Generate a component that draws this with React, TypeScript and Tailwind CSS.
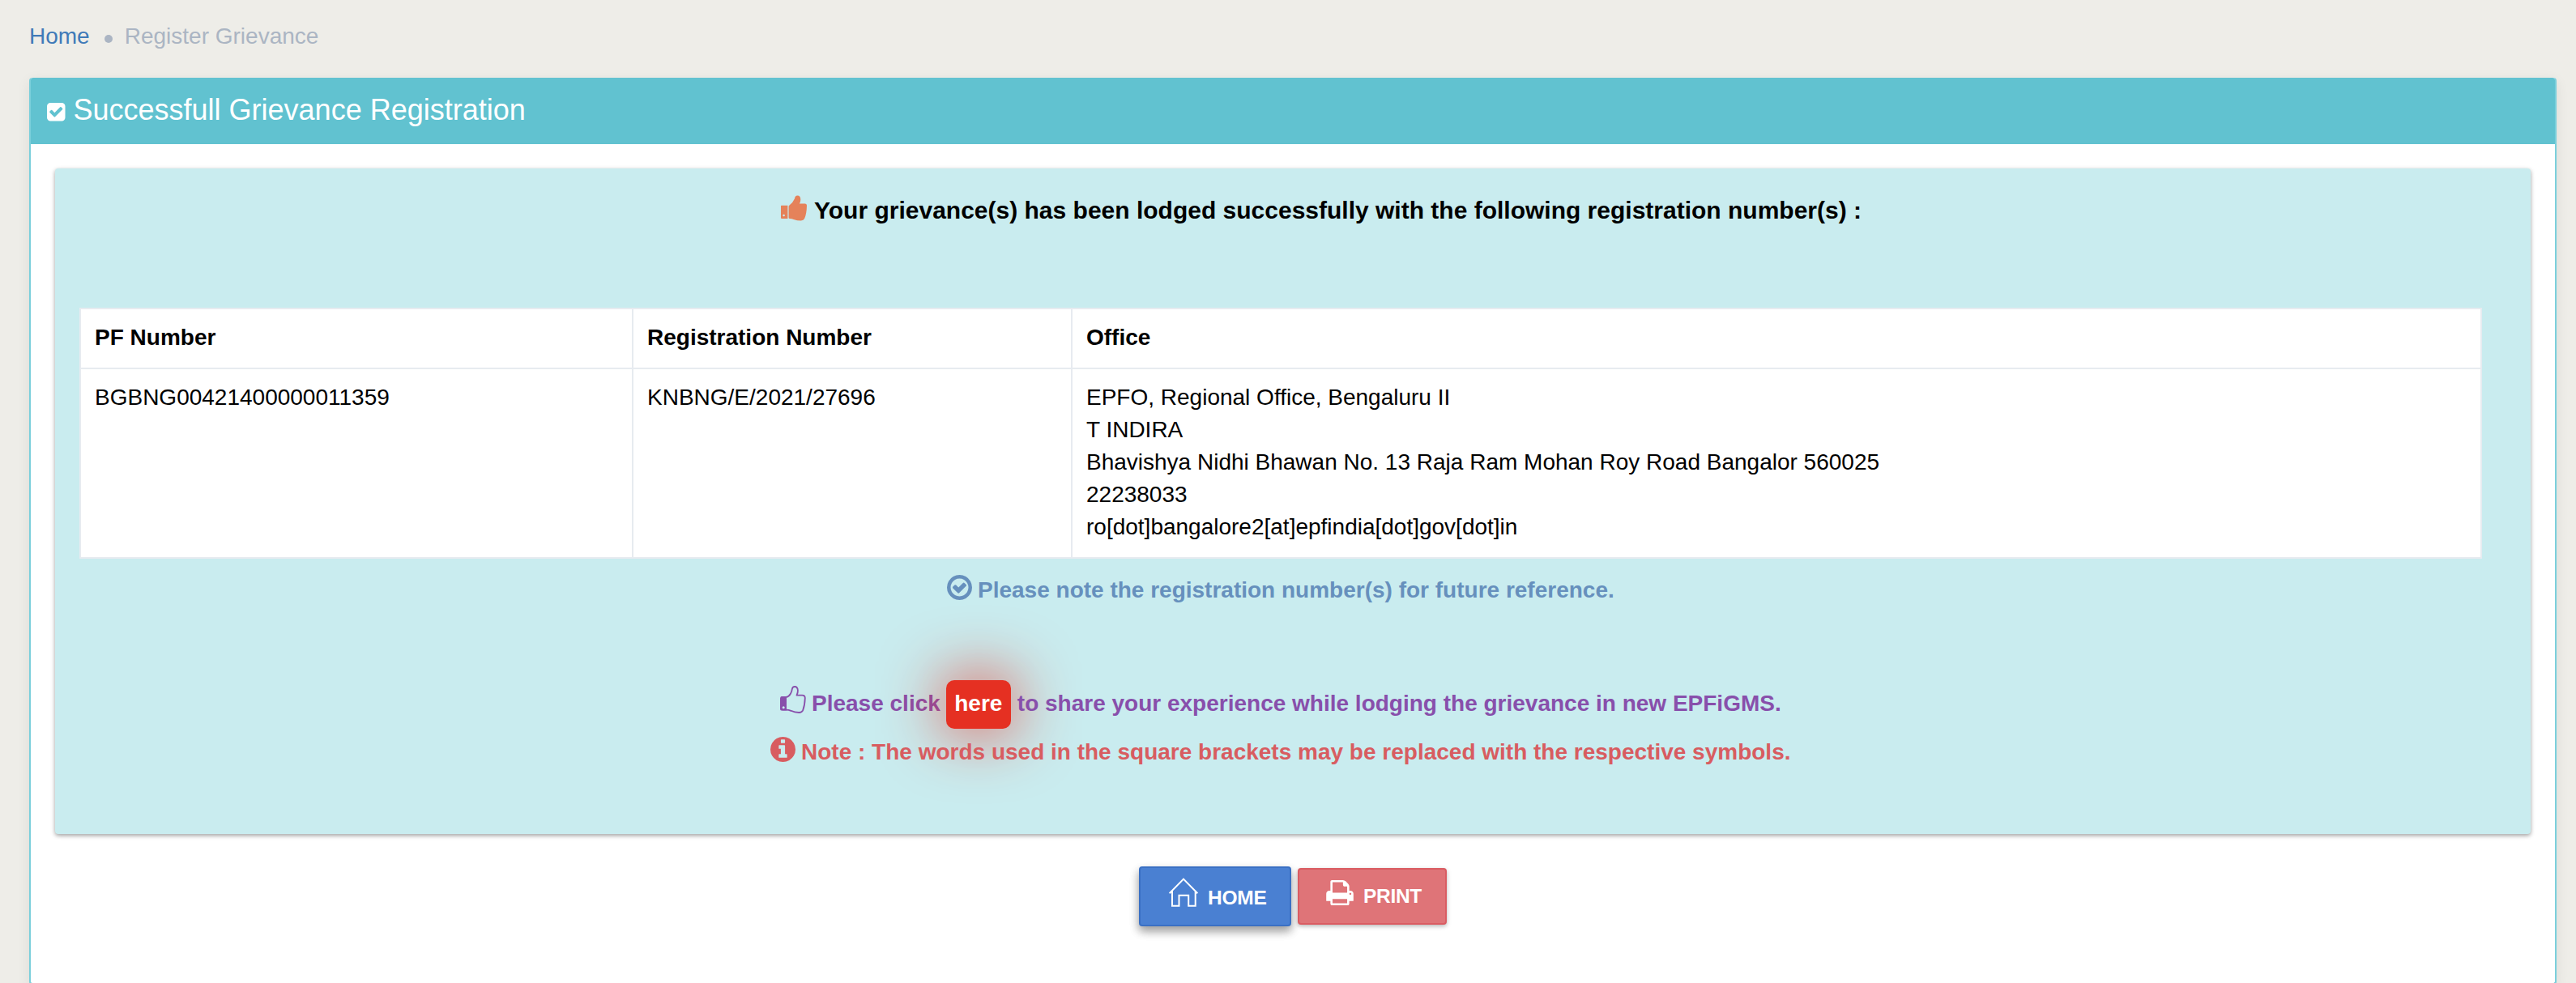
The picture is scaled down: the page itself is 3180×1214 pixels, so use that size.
import React from "react";

type IconProps = { className?: string };

function CheckSquareIcon({ className }: IconProps) {
  return (
    <svg className={className} viewBox="128 128 1536 1536" fill="currentColor">
      <path d="M813 1299l614-614q19-19 19-45t-19-45l-102-102q-19-19-45-19t-45 19l-467 467-211-211q-19-19-45-19t-45 19l-102 102q-19 19-19 45t19 45l358 358q19 19 45 19t45-19zm851-883v960q0 119-84.500 203.500t-203.500 84.500h-960q-119 0-203.500-84.500t-84.500-203.500v-960q0-119 84.500-203.500t203.500-84.500h960q119 0 203.500 84.500t84.500 203.500z" />
    </svg>
  );
}

function CheckCircleIcon({ className }: IconProps) {
  return (
    <svg className={className} viewBox="128 128 1536 1536" fill="currentColor">
      <path d="M1299 813l-422 422q-19 19-45 19t-45-19l-294-294q-19-19-19-45t19-45l102-102q19-19 45-19t45 19l147 147 275-275q19-19 45-19t45 19l102 102q19 19 19 45t-19 45zm141 83q0-148-73-273t-198-198-273-73-273 73-198 198-73 273 73 273 198 198 273 73 273-73 198-198 73-273zm224 0q0 209-103 385.500t-279.500 279.500-385.500 103-385.500-103-279.500-279.500-103-385.500 103-385.500 279.500-279.500 385.500-103 385.500 103 279.500 279.500 103 385.500z" />
    </svg>
  );
}

function InfoCircleIcon({ className }: IconProps) {
  return (
    <svg className={className} viewBox="128 128 1536 1536" fill="currentColor">
      <path d="M1152 1376v-160q0-14-9-23t-23-9h-96v-512q0-14-9-23t-23-9h-320q-14 0-23 9t-9 23v160q0 14 9 23t23 9h96v320h-96q-14 0-23 9t-9 23v160q0 14 9 23t23 9h448q14 0 23-9t9-23zm-128-896v-160q0-14-9-23t-23-9h-192q-14 0-23 9t-9 23v160q0 14 9 23t23 9h192q14 0 23-9t9-23zm640 416q0 209-103 385.500t-279.500 279.500-385.500 103-385.500-103-279.500-279.500-103-385.500 103-385.500 279.500-279.500 385.500-103 385.500 103 279.500 279.500 103 385.500z" />
    </svg>
  );
}

function PrintIcon({ className }: IconProps) {
  return (
    <svg className={className} viewBox="0 128 1664 1536" fill="currentColor">
      <path d="M384 1536h896v-256h-896v256zm0-640h896v-384h-160q-40 0-68-28t-28-68v-160h-640v640zm1152 64q0-26-19-45t-45-19-45 19-19 45 19 45 45 19 45-19 19-45zm128 0v416q0 13-9.500 22.500t-22.500 9.500h-224v160q0 40-28 68t-68 28h-960q-40 0-68-28t-28-68v-160h-224q-13 0-22.500-9.500t-9.500-22.500v-416q0-79 56.500-135.500t135.500-56.500h64v-544q0-40 28-68t68-28h672q40 0 88 20t76 48l152 152q28 28 48 76t20 88v256h64q79 0 135.500 56.500t56.500 135.500z" />
    </svg>
  );
}

function HomeIcon({ className }: IconProps) {
  return (
    <svg className={className} viewBox="0 0 36 36" fill="none" stroke="currentColor" strokeWidth="2">
      <path d="M.6 19.200 18 1.600l17.400 17.600M4 16v18.800h8.500v-13h11.700v13h8.500V16" />
    </svg>
  );
}

function ThumbSolidIcon({ className }: IconProps) {
  return (
    <svg className={className} viewBox="0 0 32 32" fill="currentColor">
      <path fillRule="evenodd" d="M.6 12.800h7.800v16.100H1Q0 28.900 0 28V13.400q0-.6.6-.6zM3.600 23.800a1.200 1.200 0 1 0 0 2.500 1.200 1.200 0 0 0 0-2.500z" />
      <path d="M9.600 14q0-.9.900-1.500Q14.600 9.600 17 4.200 17.500.500 20.400.500q3.900 0 3.900 4.900 0 2.400-1.300 5h6.600q2.400 0 2.400 2.600-.3 10.500-2.900 16-1 2.400-4.300 2.400-4.800 0-9.100-1.500-2.200-.8-4.600-.9-1.500 0-1.500-1.300z" />
    </svg>
  );
}

function ThumbOutlineIcon({ className }: IconProps) {
  return (
    <svg className={className} viewBox="0 0 32 34" fill="none">
      <path
        fill="currentColor"
        fillRule="evenodd"
        d="M2 13h6v17.500H1.500Q0 30.500 0 28.500V15.500Q0 13 2 13zM4.200 25.300a1.500 1.500 0 1 0 0 3 1.500 1.500 0 0 0 0-3z"
      />
      <path
        stroke="currentColor"
        strokeWidth="1.800"
        strokeLinejoin="round"
        d="M1.500 13.900h6q3.200-.3 5.400-4.200 1.600-2.600 1.900-5.600Q15.300 1 18 1q3.700 0 3.900 4.800.1 3-1.400 5.800h6.700q3.600 0 3.600 3.500-.3 9-2.700 15.300-1.200 2.600-4.700 2.600-5.400 0-9.900-2.200-2.800-1.200-6-1.200h-5"
      />
    </svg>
  );
}

const officeLines = [
  "EPFO, Regional Office, Bengaluru II",
  "T INDIRA",
  "Bhavishya Nidhi Bhawan No. 13 Raja Ram Mohan Roy Road Bangalor 560025",
  "22238033",
  "ro[dot]bangalore2[at]epfindia[dot]gov[dot]in",
];

function RegistrationTable() {
  const head = "border-2 border-[#e7ebf0] px-[17px] pt-[15px] pb-[17px] text-left font-bold";
  const cell = "border-2 border-[#e7ebf0] px-[17px] pt-[15px] pb-[17px] align-top";
  return (
    <table className="mt-[98px] ml-[30px] h-[310px] w-[2966px] table-fixed border-collapse bg-white text-[28px] leading-[40px] text-black">
      <colgroup>
        <col className="w-[682px]" />
        <col className="w-[542px]" />
        <col />
      </colgroup>
      <thead>
        <tr>
          <th className={head}>PF Number</th>
          <th className={head}>Registration Number</th>
          <th className={head}>Office</th>
        </tr>
      </thead>
      <tbody>
        <tr>
          <td className={cell}>BGBNG00421400000011359</td>
          <td className={cell}>KNBNG/E/2021/27696</td>
          <td className={cell}>
            {officeLines.map((line) => (
              <div key={line}>{line}</div>
            ))}
          </td>
        </tr>
      </tbody>
    </table>
  );
}

export default function App() {
  return (
    <div className="h-[1214px] w-[3180px] overflow-hidden bg-[#eeede8] px-[36px] font-['Liberation_Sans',Arial,sans-serif] whitespace-nowrap">
      <nav className="flex h-[96px] items-start pt-[25px] text-[28px] leading-[40px]">
        <a className="text-[#3f7ab8]">Home</a>
        <span className="mt-[18px] ml-[18px] size-[10px] rounded-full bg-[#abb5c3]" />
        <span className="ml-[15px] text-[#abb5c3]">Register Grievance</span>
      </nav>

      <section className="h-[1120px] w-[3120px] rounded-[4px] border-2 border-t-0 border-[#7bcfdb] bg-white shadow-[0_4px_16px_rgba(0,0,0,0.08)]">
        <header className="flex h-[82px] items-start rounded-t-[3px] bg-[#61c2d0] pl-5 text-white">
          <CheckSquareIcon className="mt-[31px] size-[22.500px]" />
          <h1 className="ml-[10px] pt-[20px] text-[36px] leading-[40px]">Successfull Grievance Registration</h1>
        </header>

        <div className="mt-[30px] ml-[30px] h-[822px] w-[3056px] rounded-[4px] bg-[#c9ecef] pt-[30px] text-[28px] leading-[40px] font-bold shadow-[0_2px_6px_rgba(0,0,0,0.2),0_2px_4px_rgba(0,0,0,0.2)]">
          <div className="flex h-[44px] items-start pl-[896px] text-[30px] leading-[44px] text-black">
            <ThumbSolidIcon className="mt-[3px] size-8 text-[#e5825a]" />
            <span className="ml-[9px]">
              Your grievance(s) has been lodged successfully with the following registration number(s) :
            </span>
          </div>

          <div className="font-normal">
            <RegistrationTable />
          </div>

          <div className="mt-[18px] flex h-[40px] items-start pl-[1101px] text-[#6690bd]">
            <CheckCircleIcon className="mt-[2px] size-[31px]" />
            <span className="ml-[7px] pt-px">Please note the registration number(s) for future reference.</span>
          </div>

          <div className="mt-[92px] flex h-[60px] items-start pl-[895px] leading-[58px] text-[#884fab]">
            <ThumbOutlineIcon className="mt-[7px] h-[34px] w-8" />
            <span className="ml-[7px]">Please click</span>
            <a className="ml-[7px] h-[60px] w-[80px] rounded-[10px] bg-[#e53022] text-center text-white shadow-[0_0_80px_#e53022]">
              here
            </a>
            <span className="ml-[8px]">to share your experience while lodging the grievance in new EPFiGMS.</span>
          </div>

          <div className="relative mt-2 flex h-[40px] items-start pl-[883px] text-[#d85c60]">
            <InfoCircleIcon className="mt-[2px] size-[31px]" />
            <span className="ml-[7px] pt-px">Note : The words used in the square brackets may be replaced with the respective symbols.</span>
          </div>
        </div>

        <div className="mt-[40px] ml-[1368px] flex items-start gap-2 text-[24.500px] leading-[30px] font-bold text-white">
          <button className="flex h-[74px] w-[188px] items-start rounded-[4px] border-2 border-[#3a70c4] bg-[#4a80d2] pl-[35px] shadow-[0_6px_12px_rgba(0,0,0,0.22),0_6px_12px_rgba(0,0,0,0.22)]">
            <HomeIcon className="mt-[12px] size-[36px]" />
            <span className="ml-[12px] pt-[22px] tracking-[-0.2px]">HOME</span>
          </button>
          <button className="mt-[2px] flex h-[70px] w-[184px] items-start rounded-[4px] border-2 border-[#da5c62] bg-[#df7478] pl-[33px] shadow-[0_2px_6px_rgba(0,0,0,0.15),0_2px_4px_rgba(0,0,0,0.15)]">
            <PrintIcon className="mt-[13px] h-[31px] w-[34px]" />
            <span className="ml-[12px] pt-[18px] tracking-[-0.3px]">PRINT</span>
          </button>
        </div>
      </section>
    </div>
  );
}
